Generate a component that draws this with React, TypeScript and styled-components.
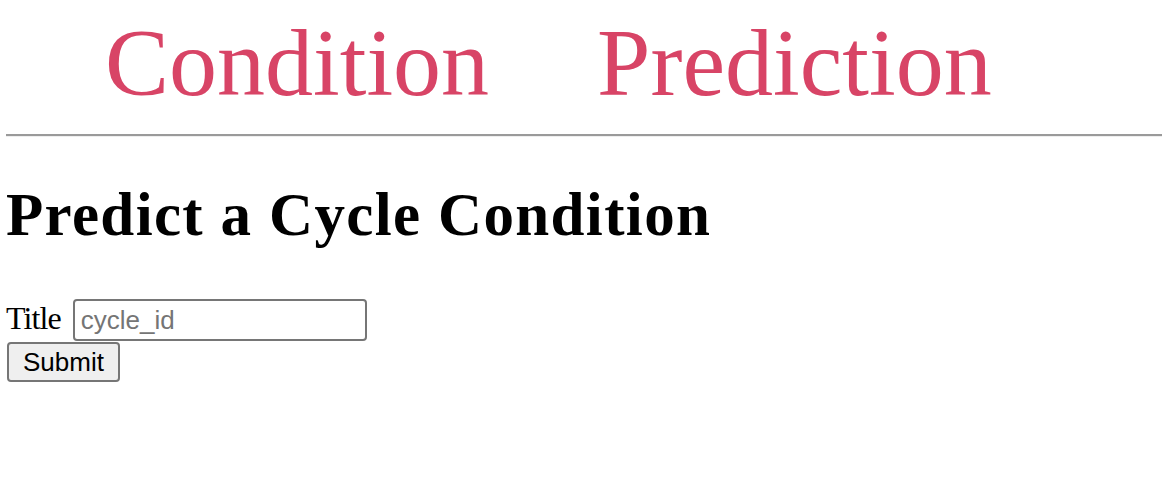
import React from "react";
import styled, { createGlobalStyle } from "styled-components";

const GlobalStyle = createGlobalStyle`
  html, body {
    margin: 0;
    padding: 0;
    background: #ffffff;
  }
  body {
    font-family: "Liberation Serif", "Times New Roman", serif;
    color: #000000;
    overflow: hidden;
  }
`;

const Page = styled.div`
  padding-left: 6px;
`;

const Nav = styled.nav`
  display: flex;
  gap: 108px;
  padding: 8px 0 0 99px;
`;

const NavLink = styled.a`
  font-family: "Liberation Serif", "Times New Roman", serif;
  font-size: 96px;
  line-height: 110px;
  color: #d84466;
  text-decoration: none;
`;

const Rule = styled.hr`
  margin: 16px 0 0 0;
  border: none;
  border-top: 2px solid #9a9a9a;
  border-bottom: 1px solid #eeeeee;
  height: 0;
`;

const Heading = styled.h1`
  font-family: "Liberation Serif", "Times New Roman", serif;
  font-size: 61px;
  font-weight: bold;
  letter-spacing: 1.35px;
  line-height: 70px;
  margin: 43px 0 49px 0;
`;

const Form = styled.form`
  display: flex;
  flex-direction: column;
  align-items: flex-start;
  gap: 1px;
`;

const Row = styled.div`
  display: flex;
  align-items: baseline;
  gap: 12px;
`;

const Label = styled.label`
  font-family: "Liberation Serif", "Times New Roman", serif;
  font-size: 32px;
  letter-spacing: -0.9px;
`;

const Input = styled.input`
  box-sizing: border-box;
  width: 294px;
  height: 42px;
  padding: 0 6px;
  border: 2px solid #767676;
  border-radius: 4px;
  font-family: "Liberation Sans", Arial, sans-serif;
  font-size: 26px;
  color: #000;
  background: #fff;
  outline: none;
  &::placeholder {
    color: #757575;
  }
`;

const Button = styled.button`
  box-sizing: border-box;
  height: 40px;
  padding: 0 14px;
  margin-left: 1px;
  border: 2px solid #767676;
  border-radius: 4px;
  background: #efefef;
  font-family: "Liberation Sans", Arial, sans-serif;
  font-size: 26px;
  color: #000;
  cursor: pointer;
`;

export default function App() {
  return (
    <>
      <GlobalStyle />
      <Page>
        <Nav>
          <NavLink href="#">Condition</NavLink>
          <NavLink href="#">Prediction</NavLink>
        </Nav>
        <Rule />
        <Heading>Predict a Cycle Condition</Heading>
        <Form onSubmit={(e) => e.preventDefault()}>
          <Row>
            <Label htmlFor="title">Title</Label>
            <Input id="title" type="text" placeholder="cycle_id" />
          </Row>
          <Button type="submit">Submit</Button>
        </Form>
      </Page>
    </>
  );
}
